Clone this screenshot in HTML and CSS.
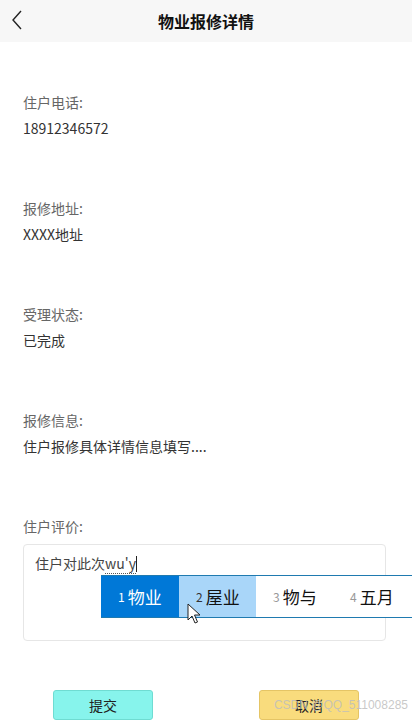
FILE: index.html
```html
<!DOCTYPE html>
<html lang="zh-CN">
<head>
  <meta charset="UTF-8">
  <meta name="viewport" content="width=device-width, initial-scale=1.0">
  <title>物业报修详情</title>
  <link rel="stylesheet" href="styles.css">
</head>
<body>
  <div class="header">
    <svg class="back" width="12" height="20" viewBox="0 0 12 20">
      <path d="M10 1 L2 10 L10 19" fill="none" stroke="#222" stroke-width="1.4"/>
    </svg>
    <h1>物业报修详情</h1>
  </div>

  <div class="content">
    <div class="field">
      <div class="label">住户电话:</div>
      <div class="value">18912346572</div>
    </div>
    <div class="field">
      <div class="label">报修地址:</div>
      <div class="value">XXXX地址</div>
    </div>
    <div class="field">
      <div class="label">受理状态:</div>
      <div class="value">已完成</div>
    </div>
    <div class="field">
      <div class="label">报修信息:</div>
      <div class="value">住户报修具体详情信息填写....</div>
    </div>
    <div class="field last">
      <div class="label">住户评价:</div>
      <div class="textarea">住户对此次<span class="compose">wu'y</span><span class="caret"></span></div>
    </div>
  </div>

  <div class="ime">
    <div class="cand active"><span class="num">1</span>物业</div>
    <div class="cand hover"><span class="num">2</span>屋业</div>
    <div class="cand"><span class="num">3</span>物与</div>
    <div class="cand"><span class="num">4</span>五月</div>
  </div>

  <svg class="pointer" width="14" height="22" viewBox="0 0 14 22">
    <path d="M1 1 L1 17 L5 13 L8 20 L10.5 19 L7.5 12 L13 12 Z" fill="#fff" stroke="#222" stroke-width="1"/>
  </svg>

  <div class="actions">
    <button class="btn submit">提交</button>
    <button class="btn cancel">取消</button>
  </div>

  <div class="watermark">CSDN @QQ_511008285</div>
</body>
</html>
```

FILE: styles.css
```css
* {
  margin: 0;
  padding: 0;
  box-sizing: border-box;
}

body {
  font-family: "Noto Sans CJK SC", "Noto Sans", sans-serif;
  background: #fff;
  color: #333;
  width: 412px;
  height: 721px;
  overflow: hidden;
  position: relative;
}

.header {
  height: 42px;
  background: #f7f7f7;
  display: flex;
  align-items: center;
  justify-content: center;
  position: relative;
}

.header h1 {
  font-size: 16px;
  font-weight: bold;
  color: #111;
}

.back {
  position: absolute;
  left: 11px;
  top: 10px;
}

.content {
  padding: 47px 26px 0 23px;
}

.field {
  margin-bottom: 54px;
}

.field.last {
  margin-bottom: 0;
}

.label {
  font-size: 14px;
  line-height: 26px;
  color: #666;
}

.value {
  font-size: 14px;
  line-height: 26px;
  color: #333;
}

.textarea {
  margin-top: 5px;
  height: 97px;
  border: 1px solid #e6e6e6;
  border-radius: 4px;
  padding: 6px 11px;
  font-size: 14px;
  line-height: 24px;
  color: #444;
}

.compose {
  border-bottom: 1px dotted #555;
}

.caret {
  display: inline-block;
  width: 1px;
  height: 16px;
  background: #222;
  vertical-align: -3px;
}

.ime {
  position: absolute;
  left: 101px;
  top: 575px;
  width: 330px;
  height: 43px;
  display: flex;
  background: #fff;
  border-top: 1px solid #1f7ab0;
  border-bottom: 1px solid #1f7ab0;
}

.cand {
  width: 77px;
  padding-left: 17px;
  display: flex;
  align-items: center;
  font-size: 17px;
  color: #111;
}

.cand .num {
  font-size: 12px;
  color: #999;
  margin-right: 3px;
}

.cand.active {
  background: #0078d7;
  color: #fff;
  width: 78px;
}

.cand.active .num {
  color: #fff;
}

.cand.hover {
  background: #a9d6f9;
}

.cand.hover .num {
  color: #333;
}

.pointer {
  position: absolute;
  left: 187px;
  top: 603px;
}

.actions {
  position: absolute;
  left: 0;
  right: 0;
  top: 690px;
  display: flex;
  justify-content: space-around;
}

.btn {
  width: 100px;
  height: 30px;
  border-radius: 3px;
  font-family: inherit;
  font-size: 14px;
  color: #222;
}

.submit {
  background: #87f4ec;
  border: 1px solid #6fdcd2;
}

.cancel {
  background: #f9dc7d;
  border: 1px solid #e5c565;
}

.watermark {
  position: absolute;
  right: 4px;
  top: 698px;
  font-size: 12px;
  color: rgba(190, 190, 190, 0.85);
  font-family: "Liberation Sans", sans-serif;
}
```
